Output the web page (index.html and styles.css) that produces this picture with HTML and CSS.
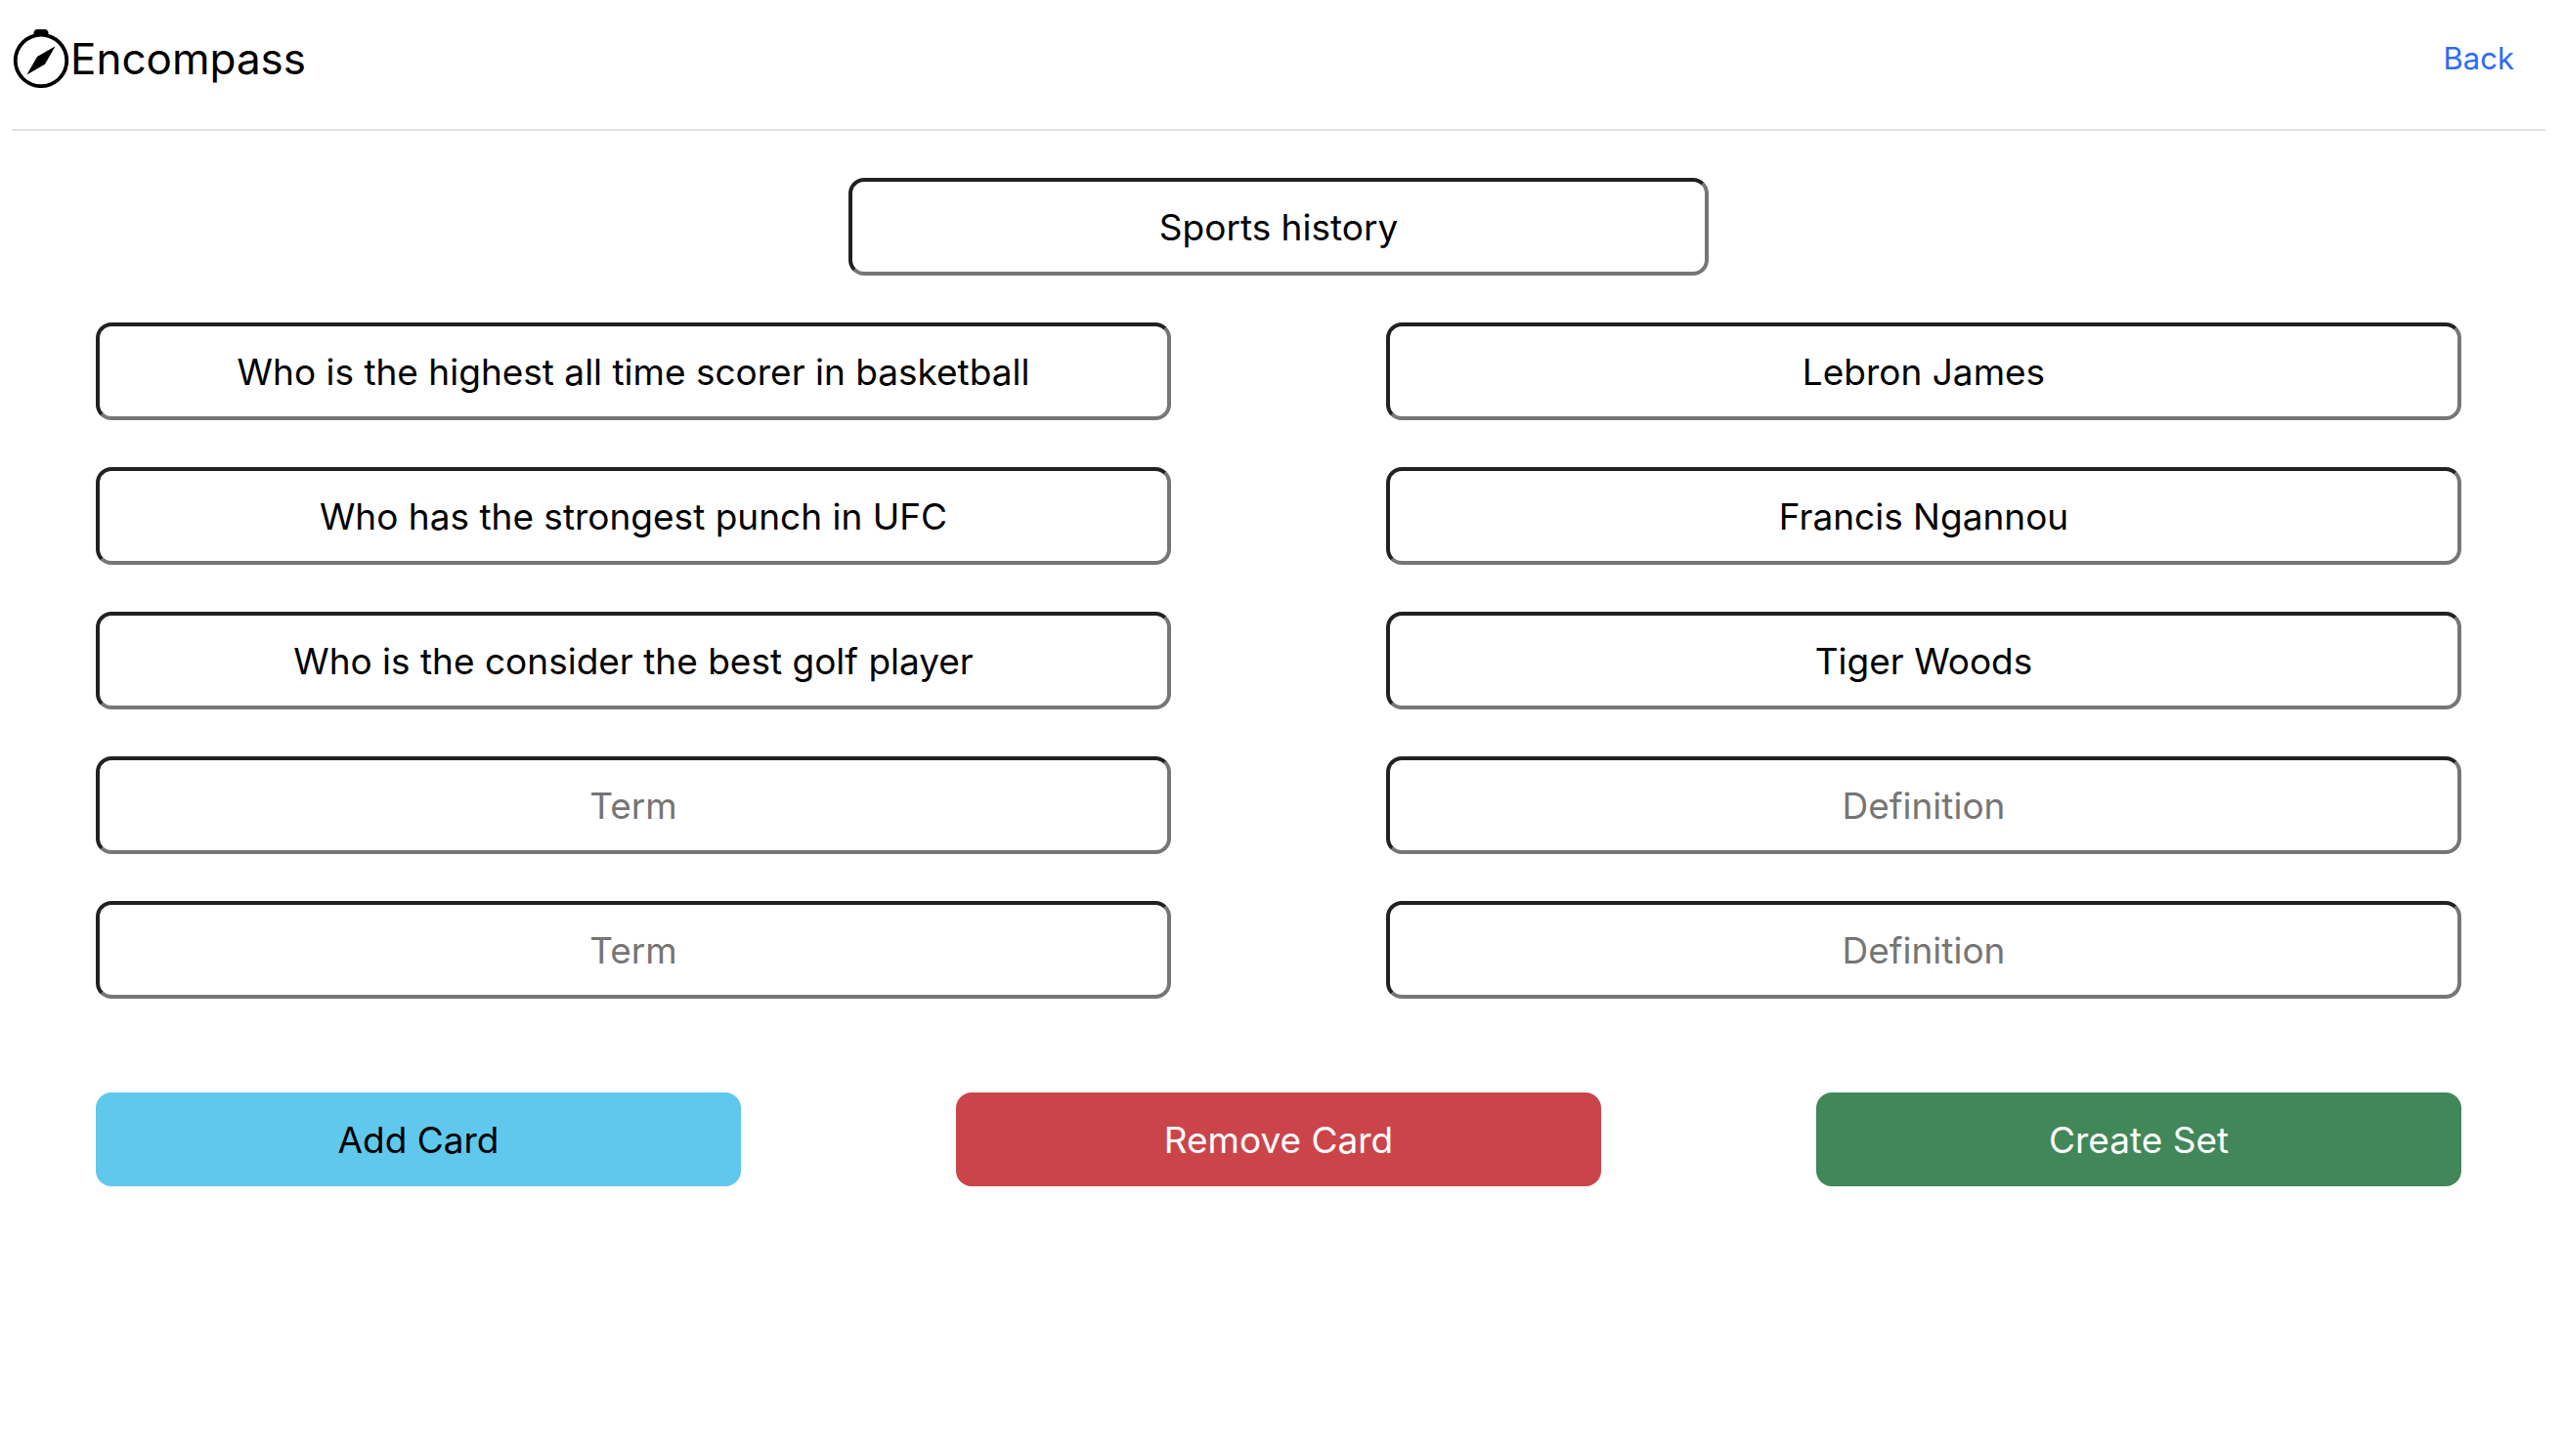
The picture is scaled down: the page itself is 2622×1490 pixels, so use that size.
FILE: index.html
```html
<!DOCTYPE html>
<html lang="en">
<head>
  <meta charset="utf-8">
  <meta name="viewport" content="width=device-width, initial-scale=1">
  <title>Encompass</title>
  <link rel="stylesheet" href="styles.css">
</head>
<body>
  <header class="navbar">
    <a class="brand" href="#">
      <svg class="brand-icon" viewBox="0 0 16 16" fill="currentColor" aria-hidden="true">
        <path d="M8 16.016a7.5 7.5 0 0 0 1.962-14.74A1 1 0 0 0 9 0H7a1 1 0 0 0-.962 1.276A7.5 7.5 0 0 0 8 16.016m6.5-7.5a6.5 6.5 0 1 1-13 0 6.5 6.5 0 0 1 13 0"/>
        <path d="m6.94 7.44 4.95-2.83-2.83 4.95-4.949 2.83z"/>
      </svg>
      <span>Encompass</span>
    </a>
    <a class="nav-link" href="#">Back</a>
  </header>
  <main>
    <form class="set-form">
      <input class="field title-field" type="text" aria-label="Title" placeholder="Title" value="Sports history">
      <div class="row">
        <input class="field" type="text" aria-label="Term" placeholder="Term" value="Who is the highest all time scorer in basketball">
        <input class="field" type="text" aria-label="Definition" placeholder="Definition" value="Lebron James">
      </div>
      <div class="row">
        <input class="field" type="text" aria-label="Term" placeholder="Term" value="Who has the strongest punch in UFC">
        <input class="field" type="text" aria-label="Definition" placeholder="Definition" value="Francis Ngannou">
      </div>
      <div class="row">
        <input class="field" type="text" aria-label="Term" placeholder="Term" value="Who is the consider the best golf player">
        <input class="field" type="text" aria-label="Definition" placeholder="Definition" value="Tiger Woods">
      </div>
      <div class="row">
        <input class="field" type="text" aria-label="Term" placeholder="Term">
        <input class="field" type="text" aria-label="Definition" placeholder="Definition">
      </div>
      <div class="row">
        <input class="field" type="text" aria-label="Term" placeholder="Term">
        <input class="field" type="text" aria-label="Definition" placeholder="Definition">
      </div>
      <div class="row actions">
        <button class="btn btn-add" type="button">Add Card</button>
        <button class="btn btn-remove" type="button">Remove Card</button>
        <button class="btn btn-create" type="submit">Create Set</button>
      </div>
    </form>
  </main>
</body>
</html>
```
FILE: styles.css
```css
* {
  box-sizing: border-box;
}

body {
  margin: 0;
  padding: 0 18px 0 12px;
  background: #fff;
  color: #000;
  font-family: Inter, "Liberation Sans", sans-serif;
}

.navbar {
  display: flex;
  align-items: center;
  justify-content: space-between;
  padding: 24px 32px 36px 0;
  border-bottom: 2px solid #dee2e6;
}

.brand {
  display: flex;
  align-items: center;
  color: #000;
  font-size: 44px;
  line-height: 72px;
  text-decoration: none;
}

.brand-icon {
  width: 60px;
  height: 60px;
}

.nav-link {
  color: #2b6cf6;
  font-size: 31px;
  line-height: 48px;
  text-decoration: none;
}

.set-form {
  display: flex;
  flex-direction: column;
  gap: 48px;
  padding: 48px 86px;
}

/* Eleven equal tracks: fields take five, buttons take three */
.row {
  display: grid;
  grid-template-columns: repeat(11, 1fr);
}

.field {
  grid-column: span 5;
  width: 100%;
  min-width: 0;
  height: 100px;
  padding: 4px 8px;
  border: 4px solid;
  border-color: #212121 #767676 #767676 #212121;
  border-radius: 16px;
  background: #fff;
  color: #000;
  font-family: inherit;
  font-size: 37px;
  text-align: center;
}

.row .field + .field {
  grid-column: 7 / span 5;
}

.field::placeholder {
  color: #757575;
  opacity: 1;
}

.title-field {
  align-self: center;
  width: calc(400% / 11);
}

.actions {
  padding-top: 48px;
}

.btn {
  grid-column: span 3;
  height: 96px;
  padding: 0 16px;
  border: 0;
  border-radius: 16px;
  color: #fff;
  font-family: inherit;
  font-size: 37px;
  cursor: pointer;
}

.btn-add {
  background: #5fc8ec;
  color: #000;
}

.btn-remove {
  grid-column: 5 / span 3;
  background: #cb444a;
}

.btn-create {
  grid-column: 9 / span 3;
  background: #418759;
}
```
